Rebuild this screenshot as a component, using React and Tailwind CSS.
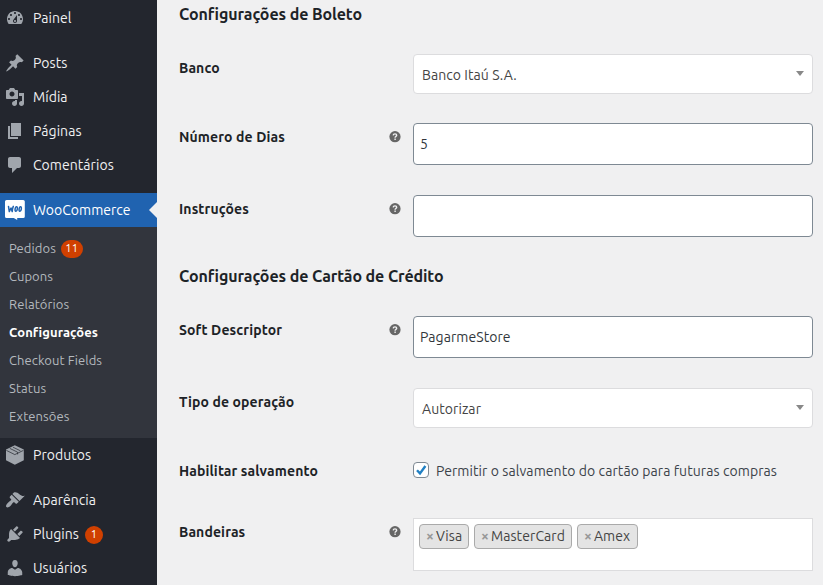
import React from "react";

const icons = {
  dashboard:
    "M3.76 16h12.48c1.1-1.37 1.76-3.11 1.76-5 0-4.42-3.58-8-8-8s-8 3.58-8 8c0 1.89.66 3.63 1.76 5zM10 4c.55 0 1 .45 1 1s-.45 1-1 1-1-.45-1-1 .45-1 1-1zM6 6c.55 0 1 .45 1 1s-.45 1-1 1-1-.45-1-1 .45-1 1-1zm8 0c.55 0 1 .45 1 1s-.45 1-1 1-1-.45-1-1 .45-1 1-1zm-5.37 5.55L12 7v6c0 1.1-.9 2-2 2s-2-.9-2-2c0-.57.24-1.08.63-1.45zM4 10c.55 0 1 .45 1 1s-.45 1-1 1-1-.45-1-1 .45-1 1-1zm12 0c.55 0 1 .45 1 1s-.45 1-1 1-1-.45-1-1 .45-1 1-1zm-5 3c0-.55-.45-1-1-1s-1 .45-1 1 .45 1 1 1 1-.45 1-1z",
  post: "M10.44 3.02l1.82-1.82 6.36 6.35-1.83 1.82c-1.05-.68-2.48-.57-3.41.36l-.75.75c-.92.93-1.04 2.35-.35 3.41l-1.83 1.82-2.41-2.41-2.8 2.79c-.42.42-3.38 2.71-3.8 2.29s1.86-3.39 2.28-3.81l2.79-2.79L4.1 9.36l1.83-1.82c1.05.69 2.48.57 3.4-.36l.75-.75c.93-.92 1.05-2.35.36-3.41z",
  media:
    "M13 11V4c0-.55-.45-1-1-1h-1.67L9 1H5L3.67 3H2c-.55 0-1 .45-1 1v7c0 .55.45 1 1 1h10c.55 0 1-.45 1-1zM7 4.5c1.38 0 2.5 1.12 2.5 2.5S8.38 9.5 7 9.5 4.5 8.38 4.5 7 5.62 4.5 7 4.5zM14 6h5v10.5c0 1.38-1.12 2.5-2.5 2.5S14 17.88 14 16.5s1.12-2.5 2.5-2.5c.17 0 .34.02.5.05V9h-3V6zm-4 8.05V13h2v3.5c0 1.38-1.12 2.5-2.5 2.5S7 17.88 7 16.5 8.12 14 9.5 14c.17 0 .34.02.5.05z",
  page: "M6 15V2h10v13H6zm-1 1h8v2H3V5h2v11z",
  comments:
    "M5 2h9c1.1 0 2 .9 2 2v7c0 1.1-.9 2-2 2h-2l-5 5v-5H5c-1.1 0-2-.9-2-2V4c0-1.1.9-2 2-2z",
  appearance:
    "M14.48 11.06L7.41 3.99l1.5-1.5c.5-.56 2.3-.47 3.51.32 1.21.8 1.43 1.28 2.91 2.1 1.18.64 2.45 1.26 4.45.85zm-.71.71L6.7 4.7 4.93 6.47c-.39.39-.39 1.02 0 1.41l1.06 1.06c.39.39.39 1.03 0 1.42-.6.6-1.43 1.11-2.21 1.69-.35.26-.7.53-1.01.84C1.43 14.23.4 16.08 1.4 17.07c.99 1 2.84-.03 4.18-1.36.31-.31.58-.66.85-1.02.57-.78 1.08-1.61 1.69-2.21.39-.39 1.02-.39 1.41 0l1.06 1.06c.39.39 1.02.39 1.41 0z",
  plugins:
    "M13.11 4.36L9.87 7.6 8 5.73l3.24-3.24c.35-.34 1.05-.2 1.56.32.52.51.66 1.21.31 1.55zm-8 1.77l.91-1.12 9.01 9.01-1.19.84c-.71.71-2.63 1.16-3.82 1.16H6.14L4.9 17.26c-.59.59-1.54.59-2.12 0-.59-.58-.59-1.53 0-2.12l1.24-1.24v-3.88c0-1.13.4-3.19 1.09-3.89zm7.26 3.97l3.24-3.24c.34-.35 1.04-.21 1.55.31.52.51.66 1.21.31 1.55l-3.24 3.25z",
  users:
    "M10 9.25c-2.27 0-2.73-3.44-2.73-3.44C7 4.02 7.82 2 9.97 2c2.16 0 2.98 2.02 2.71 3.81 0 0-.41 3.44-2.68 3.44zm0 2.57L12.72 10c2.39 0 4.52 2.33 4.52 4.53v2.49s-3.65 1.13-7.24 1.13c-3.65 0-7.24-1.13-7.24-1.13v-2.49c0-2.25 1.94-4.48 4.47-4.48z",
};

function MenuIcon({ name }) {
  if (name === "product") {
    return (
      <svg viewBox="0 0 20 20" className="size-5 shrink-0">
        <path d="M9.8 .2L18.8 4.6V15.2L9.8 19.8L1 15.2V4.6z" fill="#a0a5ac" />
        <path
          d="M1.4 5.4L9.8 9.6L18.4 5.4M4.8 3.4L12.6 7.2V9.4M8 2.2L15.4 5.8"
          fill="none"
          stroke="#23262e"
          strokeWidth="0.7"
        />
      </svg>
    );
  }
  return (
    <svg viewBox="0 0 20 20" className="size-5 shrink-0" fill="#a0a5ac" fillRule="evenodd">
      <path d={icons[name]} />
    </svg>
  );
}

function WooIcon() {
  return (
    <svg viewBox="0 0 20 20" className="size-5 shrink-0">
      <path
        d="M1.6 0H18.2Q19.8 0 19.8 1.6V16.4Q19.8 18 18.2 18H12.2V20L8.8 18H1.6Q0 18 0 16.4V1.6Q0 0 1.6 0z"
        fill="#fff"
      />
      <g fill="none" stroke="#2063b0" strokeWidth="1.5" strokeLinecap="round" strokeLinejoin="round">
        <path d="M3.5 6.4L4.3 11.6L6 8L7.2 11.6Q7.4 8.4 8.3 6.4" />
        <ellipse cx="11.2" cy="9" rx="1.1" ry="2.3" transform="rotate(8 11.2 9)" />
        <ellipse cx="15.2" cy="9" rx="1.1" ry="2.3" transform="rotate(8 15.2 9)" />
      </g>
    </svg>
  );
}

function MenuItem({ icon, label, badge }) {
  return (
    <a className="flex h-[34px] items-center pl-[5px] text-[#f0f0f1]">
      <MenuIcon name={icon} />
      <span className="ml-2 text-sm tracking-[0.05px]">{label}</span>
      {badge && (
        <span className="mt-[2px] ml-[6px] flex size-[18px] items-center justify-center rounded-full bg-[#d04000] pb-[2px] text-[11px] text-white">
          {badge}
        </span>
      )}
    </a>
  );
}

const submenu = [
  { label: "Pedidos", badge: "11" },
  { label: "Cupons" },
  { label: "Relatórios" },
  { label: "Configurações", current: true },
  { label: "Checkout Fields" },
  { label: "Status" },
  { label: "Extensões" },
];

function Sidebar() {
  return (
    <nav className="flex h-full w-[157px] shrink-0 flex-col bg-[#23262e] pt-px">
      <MenuItem icon="dashboard" label="Painel" />
      <div className="mt-[11px]">
        <MenuItem icon="post" label="Posts" />
        <MenuItem icon="media" label="Mídia" />
        <MenuItem icon="page" label="Páginas" />
        <MenuItem icon="comments" label="Comentários" />
      </div>
      <a className="mt-[11px] flex h-[34px] items-center bg-[#2063b0] pl-[5px] text-white">
        <WooIcon />
        <span className="ml-2 text-sm tracking-[0.03px]">WooCommerce</span>
        <svg viewBox="0 0 8 16" className="ml-auto h-4 w-2" fill="#f0f0f1">
          <path d="M8 0V16L0 8z" />
        </svg>
      </a>
      <div className="bg-[#32353d] pt-2 pb-[7px] pl-[9px]">
        {submenu.map((s) => (
          <a
            key={s.label}
            className={`flex h-7 items-center text-[13px] tracking-[0.08px] ${s.current ? "font-bold text-white" : "text-[#b4b9be]"}`}
          >
            <span>{s.label}</span>
            {s.badge && (
              <span className="ml-[5px] flex h-[18px] w-[22px] items-center justify-center rounded-full bg-[#d04000] pb-[2px] text-[11px] tracking-[0.3px] text-white">
                {s.badge}
              </span>
            )}
          </a>
        ))}
      </div>
      <MenuItem icon="product" label="Produtos" />
      <div className="mt-[11px]">
        <MenuItem icon="appearance" label="Aparência" />
        <MenuItem icon="plugins" label="Plugins" badge="1" />
        <MenuItem icon="users" label="Usuários" />
      </div>
    </nav>
  );
}

function Help() {
  return (
    <svg viewBox="0 0 12 12" className="mr-3 size-3">
      <circle cx="6" cy="5.7" r="5.6" fill="#666" />
      <path
        d="M4.2 4.4Q4.3 2.9 6 2.9Q7.7 2.9 7.7 4.3Q7.7 5.1 6.8 5.5Q6.1 5.9 6.1 6.7M6.1 7.6V8.9"
        fill="none"
        stroke="#f0f0f1"
        strokeWidth="1.4"
      />
    </svg>
  );
}

function Row({ label, help, className, children }) {
  return (
    <div className={`flex items-start ${className}`}>
      <div className="flex h-7 w-[234px] shrink-0 items-center justify-between text-sm font-bold text-[#1d2327]">
        <span className="tracking-[0.12px]">{label}</span>
        {help && <Help />}
      </div>
      {children}
    </div>
  );
}

function Select({ children }) {
  return (
    <div className="flex h-10 w-[400px] items-center justify-between rounded border border-[#dcdcde] bg-white px-2 text-sm text-[#444]">
      <span className="pt-[2px] tracking-[0.07px]">{children}</span>
      <svg viewBox="0 0 8 5" className="mb-px h-[5px] w-2" fill="#888">
        <path d="M0 0H8L4 5z" />
      </svg>
    </div>
  );
}

function TextField({ children }) {
  return (
    <div className="flex h-[42px] w-[400px] items-center rounded border border-[#7e8993] bg-white pl-[6px] text-sm tracking-[0.07px] text-[#32373c]">
      {children}
    </div>
  );
}

function Tag({ children, width }) {
  return (
    <span
      className={`flex h-[25px] items-center rounded border border-[#aaa] bg-[#e4e4e4] pb-[2px] pl-[6px] text-sm text-[#444] ${width}`}
    >
      <span className="mr-[2px] font-bold text-[#999]">×</span>
      <span className="tracking-[0.09px]">{children}</span>
    </span>
  );
}

export default function App() {
  return (
    <div className="flex h-[585px] w-[823px] overflow-hidden bg-[#f0f0f1] font-['Ubuntu','Noto_Sans',sans-serif] whitespace-nowrap">
      <Sidebar />
      <main className="flex-1 pl-[22px]">
        <h2 className="h-7 text-base leading-7 font-bold tracking-[-0.1px] text-[#1d2327]">Configurações de Boleto</h2>
        <Row label="Banco" className="mt-[26px]">
          <Select>Banco Itaú S.A.</Select>
        </Row>
        <Row label="Número de Dias" help className="mt-[29px]">
          <TextField>5</TextField>
        </Row>
        <Row label="Instruções" help className="mt-[30px]">
          <TextField />
        </Row>
        <h2 className="mt-[25px] h-7 text-base leading-7 font-bold tracking-[-0.1px] text-[#1d2327]">
          Configurações de Cartão de Crédito
        </h2>
        <Row label="Soft Descriptor" help className="mt-[26px]">
          <TextField>PagarmeStore</TextField>
        </Row>
        <Row label="Tipo de operação" className="mt-[30px]">
          <Select>Autorizar</Select>
        </Row>
        <Row label="Habilitar salvamento" className="mt-[29px]">
          <label className="flex h-7 items-center text-sm text-[#3c434a]">
            <span className="mr-[7px] mb-[2px] flex size-4 items-center justify-center rounded border border-[#7e8993] bg-white">
              <svg
                viewBox="0 0 14 14"
                className="size-[14px] shrink-0"
                fill="none"
                stroke="#2180c4"
                strokeWidth="2.4"
              >
                <path d="M3 7.2L6 10.4L11.4 3" />
              </svg>
            </span>
            <span className="tracking-[0.08px]">Permitir o salvamento do cartão para futuras compras</span>
          </label>
        </Row>
        <Row label="Bandeiras" help className="mt-[33px]">
          <div className="flex h-[53px] w-[400px] gap-[5px] border border-[#dcdcde] bg-white pt-[5px] pl-[5px]">
            <Tag width="w-[50px]">Visa</Tag>
            <Tag width="w-[98px]">MasterCard</Tag>
            <Tag width="w-[61px]">Amex</Tag>
          </div>
        </Row>
      </main>
    </div>
  );
}
